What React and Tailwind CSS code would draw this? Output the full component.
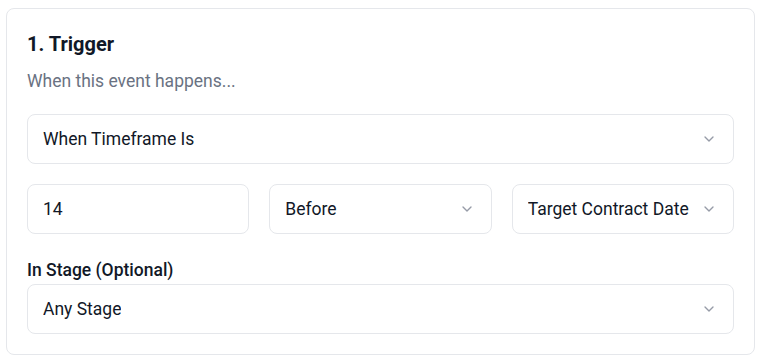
import React from "react";
import { ChevronDown } from "lucide-react";

function Select({ value }) {
  return (
    <div className="flex h-[50px] items-center justify-between rounded-lg border border-gray-200 bg-white pl-[15px] pr-4 text-[17.5px] text-[#111827]">
      <span className="truncate">{value}</span>
      <ChevronDown className="h-4 w-4 shrink-0 text-gray-500 opacity-70" />
    </div>
  );
}

export default function App() {
  return (
    <div className="min-h-[362px] bg-white px-[6px] pt-[8px]" style={{ fontFamily: "Roboto, 'Noto Sans', sans-serif" }}>
      <div className="rounded-lg border border-gray-200 bg-white p-5">
        <h3 className="text-xl font-bold leading-[30px] text-[#111827]">1. Trigger</h3>
        <p className="mt-[9px] text-[17.5px] leading-[26px] text-gray-500">When this event happens...</p>
        <div className="mt-5">
          <Select value="When Timeframe Is" />
        </div>
        <div className="mt-5 grid grid-cols-3 gap-5">
          <div className="flex h-[50px] items-center rounded-lg border border-gray-200 bg-white pl-[15px] pr-4 text-[17.5px] text-[#111827]">
            14
          </div>
          <Select value="Before" />
          <Select value="Target Contract Date" />
        </div>
        <div className="mt-[25px]">
          <label className="block text-[17.5px] font-medium leading-[22px] text-[#111827]">In Stage (Optional)</label>
          <div className="mt-[3px]">
            <Select value="Any Stage" />
          </div>
        </div>
      </div>
    </div>
  );
}
